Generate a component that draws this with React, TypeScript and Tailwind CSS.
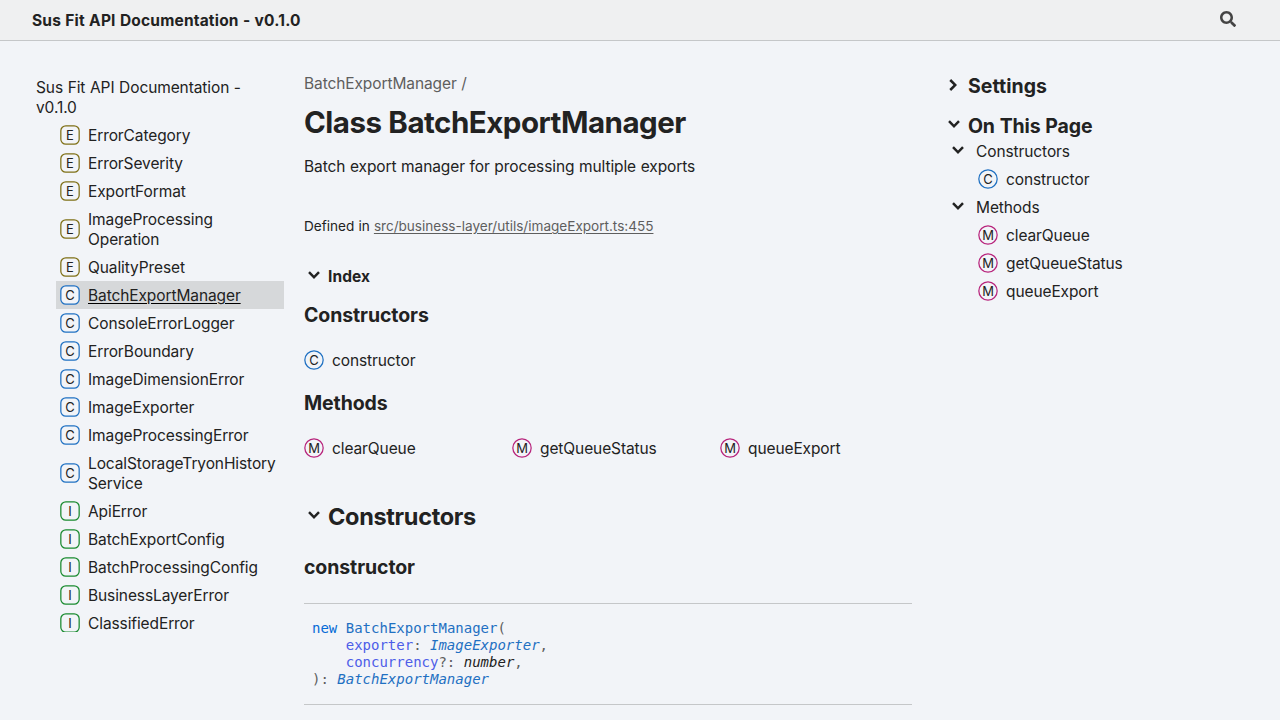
import type { ReactNode } from "react";

type Kind = "E" | "C" | "I" | "M";

const strokes: Record<Kind, string> = {
  E: "stroke-[#7e6f15]",
  C: "stroke-[#1f70c2]",
  I: "stroke-[#188a2e]",
  M: "stroke-[#b8247c]",
};

function KindIcon({ kind, round = false }: { kind: Kind; round?: boolean }) {
  return (
    <span className="grid size-5 shrink-0 place-items-center">
      <svg className={`col-start-1 row-start-1 size-5 fill-[#f2f4f8] ${strokes[kind]}`} viewBox="0 0 24 24" strokeWidth="1.5">
        {round ? <circle cx="12" cy="12" r="11" /> : <rect x="1" y="1" width="22" height="22" rx="6" />}
      </svg>
      <span className="z-10 col-start-1 row-start-1 inline-block text-[13px] leading-5 tracking-normal">{kind}</span>
    </span>
  );
}

function Chevron({ className = "" }: { className?: string }) {
  return (
    <svg className={`size-5 shrink-0 fill-[#222] ${className}`} viewBox="0 0 24 24">
      <path d="M4.93896 8.531L12 15.591L19.061 8.531L16.939 6.409L12 11.349L7.06098 6.409L4.93896 8.531Z" />
    </svg>
  );
}

const nav: { kind: Kind; name: string[]; current?: boolean }[] = [
  { kind: "E", name: ["ErrorCategory"] },
  { kind: "E", name: ["ErrorSeverity"] },
  { kind: "E", name: ["ExportFormat"] },
  { kind: "E", name: ["ImageProcessing", "Operation"] },
  { kind: "E", name: ["QualityPreset"] },
  { kind: "C", name: ["BatchExportManager"], current: true },
  { kind: "C", name: ["ConsoleErrorLogger"] },
  { kind: "C", name: ["ErrorBoundary"] },
  { kind: "C", name: ["ImageDimensionError"] },
  { kind: "C", name: ["ImageExporter"] },
  { kind: "C", name: ["ImageProcessingError"] },
  { kind: "C", name: ["LocalStorageTryonHistory", "Service"] },
  { kind: "I", name: ["ApiError"] },
  { kind: "I", name: ["BatchExportConfig"] },
  { kind: "I", name: ["BatchProcessingConfig"] },
  { kind: "I", name: ["BusinessLayerError"] },
  { kind: "I", name: ["ClassifiedError"] },
];

function Member({ kind, children }: { kind: Kind; children: ReactNode }) {
  return (
    <a className="flex h-5 items-center gap-2">
      <KindIcon kind={kind} round />
      <span className="mt-px -mb-px">{children}</span>
    </a>
  );
}

export default function App() {
  return (
    <div className="flex h-[720px] w-[1280px] flex-col overflow-hidden bg-[#f2f4f8] font-[Inter,sans-serif] text-[15.5px] leading-5 tracking-[-0.1px] [word-spacing:0.4px] whitespace-nowrap text-[#222]">
      <header className="flex h-[41px] shrink-0 items-center justify-between border-b border-[#c5c7c9] bg-[#eff0f1] pr-11 pl-8">
        <a className="mt-px -mb-px font-bold tracking-[0.19px]">Sus Fit API Documentation - v0.1.0</a>
        <svg className="mb-[3px] size-4 fill-[#444]" viewBox="0 0 16 16">
          <path d="M15.7824 13.833L12.6666 10.7177C12.5259 10.5771 12.3353 10.499 12.1353 10.499H11.6259C12.4884 9.39596 13.001 8.00859 13.001 6.49937C13.001 2.90909 10.0914 0 6.50048 0C2.90959 0 0 2.90909 0 6.49937C0 10.0896 2.90959 12.9987 6.50048 12.9987C8.00996 12.9987 9.39756 12.4863 10.5008 11.6239V12.1332C10.5008 12.3332 10.5789 12.5238 10.7195 12.6644L13.8354 15.7797C14.1292 16.0734 14.6042 16.0734 14.8948 15.7797L15.7793 14.8954C16.0731 14.6017 16.0731 14.1267 15.7824 13.833ZM6.50048 10.499C4.29094 10.499 2.50018 8.71165 2.50018 6.49937C2.50018 4.29021 4.28781 2.49976 6.50048 2.49976C8.71001 2.49976 10.5009 4.28708 10.5009 6.49937C10.5009 8.70852 8.71314 10.499 6.50048 10.499Z" />
        </svg>
      </header>
      <div className="flex min-h-0 flex-1 pl-8">
        <nav className="mt-8 h-[559px] w-[252px] shrink-0 overflow-hidden">
          <a className="block px-1 pt-[5px] pb-[3px]">
            Sus Fit API Documentation -<br />
            v0.1.0
          </a>
          <ul className="ml-6">
            {nav.map((item) => (
              <li key={item.name[0]}>
                <a className={`flex items-center gap-2 p-1 ${item.current ? "bg-[#d6d8da]" : ""}`}>
                  <KindIcon kind={item.kind} />
                  <span
                    className={`mt-px -mb-px flex flex-col ${item.current ? "underline decoration-black underline-offset-[2px]" : ""}`}
                  >
                    {item.name.map((part) => (
                      <span key={part}>{part}</span>
                    ))}
                  </span>
                </a>
              </li>
            ))}
          </ul>
        </nav>
        <main className="ml-5 w-[608px] shrink-0 pt-[33px]">
          <p className="text-[#5e5e5e]">BatchExportManager /</p>
          <h1 className="mt-[10px] text-[29.5px] leading-9 font-bold tracking-[-0.5px]">Class BatchExportManager</h1>
          <p className="mt-[17px]">Batch export manager for processing multiple exports</p>
          <p className="mt-[39px] text-[13.6px] tracking-[-0.02px]">
            Defined in <a className="text-[#5e5e5e] underline underline-offset-[2px]">src/business-layer/utils/imageExport.ts:455</a>
          </p>
          <div className="mt-[31px] flex h-5 items-center gap-1">
            <Chevron className="mb-[2px]" />
            <h5 className="font-bold tracking-[0.1px]">Index</h5>
          </div>
          <h3 className="mt-4 text-[19.5px] leading-6 font-bold">Constructors</h3>
          <div className="mt-[23px]">
            <Member kind="C">constructor</Member>
          </div>
          <h3 className="mt-[21px] text-[19.5px] leading-6 font-bold">Methods</h3>
          <div className="mt-[23px] grid grid-cols-3 gap-x-4">
            <Member kind="M">clearQueue</Member>
            <Member kind="M">getQueueStatus</Member>
            <Member kind="M">queueExport</Member>
          </div>
          <div className="mt-11 flex h-[30px] items-center gap-1">
            <Chevron className="mb-[2px]" />
            <h2 className="text-[23.5px] leading-[30px] font-bold tracking-[-0.32px]">Constructors</h2>
          </div>
          <h3 className="mt-[23px] text-[19.5px] leading-6 font-bold">constructor</h3>
          <pre className="mt-6 h-[102px] border-y border-[#c5c7c9] px-2 pt-4 font-['DejaVu_Sans_Mono',monospace] text-[14px] leading-[17px] tracking-normal text-[#5e5e5e] [word-spacing:0px]">
            <span className="text-[#056bd6]">new</span> <span className="text-[#1f70c2]">BatchExportManager</span>
            {"(\n    "}
            <span className="text-[#4d5de8]">exporter</span>: <i className="text-[#1f70c2]">ImageExporter</i>
            {",\n    "}
            <span className="text-[#4d5de8]">concurrency</span>?: <i className="text-[#222]">number</i>
            {",\n): "}
            <i className="text-[#1f70c2]">BatchExportManager</i>
          </pre>
        </main>
        <aside className="ml-8 flex-1 pt-[33px]">
          <div className="flex h-6 items-center gap-1">
            <Chevron className="mb-[2px] -rotate-90" />
            <h3 className="text-[19.5px] leading-6 font-bold tracking-[0.05px]">Settings</h3>
          </div>
          <div className="mt-4 flex h-6 items-center gap-1">
            <Chevron className="mb-[2px]" />
            <h3 className="text-[19.5px] leading-6 font-bold tracking-[-0.15px]">On This Page</h3>
          </div>
          <div className="mt-[3px] ml-1 flex flex-col gap-2">
            <div className="flex h-5 items-center gap-2">
              <Chevron />
              <span className="mt-px -mb-px">Constructors</span>
            </div>
            <div className="ml-[30px]">
              <Member kind="C">constructor</Member>
            </div>
            <div className="flex h-5 items-center gap-2">
              <Chevron />
              <span className="mt-px -mb-px">Methods</span>
            </div>
            <div className="ml-[30px] flex flex-col gap-2">
              <Member kind="M">clearQueue</Member>
              <Member kind="M">getQueueStatus</Member>
              <Member kind="M">queueExport</Member>
            </div>
          </div>
        </aside>
      </div>
    </div>
  );
}
